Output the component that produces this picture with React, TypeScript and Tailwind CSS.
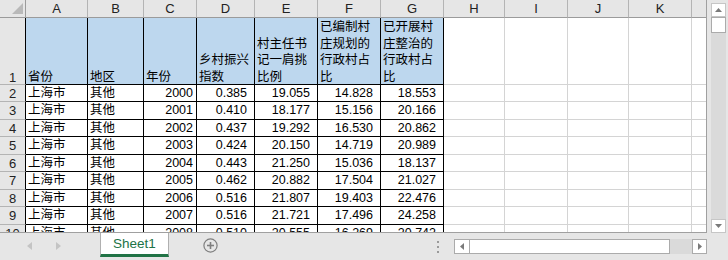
import React from "react";

const letters = ["", "A", "B", "C", "D", "E", "F", "G", "H", "I", "J", "K", ""];
const header1: string[][] = [
  ["省份"],
  ["地区"],
  ["年份"],
  ["乡村振兴", "指数"],
  ["村主任书", "记一肩挑", "比例"],
  ["已编制村", "庄规划的", "行政村占", "比"],
  ["已开展村", "庄整治的", "行政村占", "比"],
];
const data: string[][] = [
  ["2000", "0.385", "19.055", "14.828", "18.553"],
  ["2001", "0.410", "18.177", "15.156", "20.166"],
  ["2002", "0.437", "19.292", "16.530", "20.862"],
  ["2003", "0.424", "20.150", "14.719", "20.989"],
  ["2004", "0.443", "21.250", "15.036", "18.137"],
  ["2005", "0.462", "20.882", "17.504", "21.027"],
  ["2006", "0.516", "21.807", "19.403", "22.476"],
  ["2007", "0.516", "21.721", "17.496", "24.258"],
  ["2008", "0.510", "20.555", "16.269", "20.742"],
];

function HeaderRow() {
  return (
    <>
      <div className="relative bg-[#e6e6e6] border-r border-b border-r-[#9b9b9b] border-b-[#9b9b9b]">
        <svg className="absolute left-0 top-0" width="25" height="17" viewBox="0 0 25 17">
          <polygon points="23,3 23,14 12,14" fill="#b9b9b9" />
        </svg>
      </div>
      {letters.slice(1).map((l, i) => (
        <div
          key={i}
          className="bg-[#e6e6e6] border-r border-b border-r-[#b4b4b4] border-b-[#9b9b9b] flex items-center justify-center text-[13px] text-[#222] leading-none"
        >
          {l}
        </div>
      ))}
    </>
  );
}

function Row1() {
  return (
    <>
      <div className="bg-[#e6e6e6] border-r border-b border-r-black border-b-[#b4b4b4] flex items-end justify-center text-[13px] text-[#222] leading-[17px]">
        <div className="-mb-[2px]">1</div>
      </div>
      {header1.map((lines, i) => (
        <div
          key={i}
          className="bg-[#bdd7ee] border-r border-b border-black flex flex-col justify-end pl-[2px] text-[12.5px] leading-[16.8px] text-black whitespace-nowrap"
        >
          <div className="-mb-[2px]">
            {lines.map((t, j) => (
              <div key={j}>{t}</div>
            ))}
          </div>
        </div>
      ))}
      {[0, 1, 2, 3].map((k) => (
        <div key={k} className="bg-white border-r border-b border-[#d4d4d4]" />
      ))}
      <div className="bg-white border-b border-[#d4d4d4]" />
    </>
  );
}

function DataRow({ n, vals }: { n: number; vals: string[] }) {
  return (
    <>
      <div className="bg-[#e6e6e6] border-r border-b border-r-black border-b-[#b4b4b4] flex items-center justify-center text-[13px] text-[#222] leading-none">
        {n}
      </div>
      <div className="bg-white border-r border-b border-black flex items-center pl-[2px] text-[12.5px] leading-none whitespace-nowrap overflow-hidden">
        上海市
      </div>
      <div className="bg-white border-r border-b border-black flex items-center pl-[2px] text-[12.5px] leading-none whitespace-nowrap overflow-hidden">
        其他
      </div>
      <div className="bg-white border-r border-b border-black flex items-center justify-end pr-[3px] text-[12.5px] leading-none">
        {vals[0]}
      </div>
      {vals.slice(1).map((v, i) => (
        <div
          key={i}
          className="bg-white border-r border-b border-black flex items-center justify-end pr-[7px] text-[12.5px] leading-none"
        >
          {v}
        </div>
      ))}
      {[0, 1, 2, 3].map((k) => (
        <div key={k} className="bg-white border-r border-b border-[#d4d4d4]" />
      ))}
      <div className="bg-white border-b border-[#d4d4d4]" />
    </>
  );
}

function Tri({ dir, color, w, h }: { dir: "up" | "down" | "left" | "right"; color: string; w: number; h: number }) {
  let pts = "";
  if (dir === "up") pts = `0,${h} ${w},${h} ${w / 2},0`;
  if (dir === "down") pts = `0,0 ${w},0 ${w / 2},${h}`;
  if (dir === "left") pts = `${w},0 ${w},${h} 0,${h / 2}`;
  if (dir === "right") pts = `0,0 0,${h} ${w},${h / 2}`;
  return (
    <svg width={w} height={h} viewBox={`0 0 ${w} ${h}`}>
      <polygon points={pts} fill={color} />
    </svg>
  );
}

export default function App() {
  return (
    <div className="w-[728px] h-[260px] bg-[#e6e6e6] flex flex-col overflow-hidden font-['Liberation_Sans','Noto_Sans_CJK_SC',sans-serif] text-black">
      <div className="flex h-[233px]">
        <div className="w-[707px] h-[233px] border-r border-b border-[#a0a0a0] overflow-hidden bg-white">
          <div className="grid w-max grid-cols-[26px_62px_56px_53px_58px_63px_63px_63px_61px_63px_61px_63px_30px] grid-rows-[18px_67px_17px_18px_17px_18px_17px_18px_17px_18px_17px]">
            <HeaderRow />
            <Row1 />
            {data.map((vals, i) => (
              <DataRow key={i} n={i + 2} vals={vals} />
            ))}
          </div>
        </div>
        <div className="flex-1 flex flex-col pl-[4px] pt-[3px]">
          <div className="w-[15px] h-[14px] bg-white border border-[#c6c6c6] flex items-center justify-center">
            <Tri dir="up" color="#7a7a7a" w={7} h={4} />
          </div>
          <div className="w-[15px] flex-1 bg-[#dadada] flex flex-col">
            <div className="w-[15px] h-[16px] bg-white border border-[#ababab]" />
          </div>
          <div className="w-[15px] h-[14px] bg-white border border-[#c6c6c6] flex items-center justify-center">
            <Tri dir="down" color="#7a7a7a" w={7} h={4} />
          </div>
        </div>
      </div>
      <div className="flex items-start h-[27px]">
        <div className="ml-[27px] mt-[9px] flex">
          <Tri dir="left" color="#c4c4c4" w={5} h={8} />
        </div>
        <div className="ml-[24px] mt-[9px] flex">
          <Tri dir="right" color="#c4c4c4" w={5} h={8} />
        </div>
        <div className="ml-[39px] w-[69px] h-[24px] bg-white border-l border-r border-[#b0b0b0] border-b-[3px] border-b-[#217346] flex items-center justify-center text-[13.5px] text-[#217346] leading-none">
          Sheet1
        </div>
        <div className="ml-[34px] mt-[5px] flex">
          <svg width="15" height="15" viewBox="0 0 15 15">
            <circle cx="7.5" cy="7.5" r="6.6" fill="none" stroke="#7f7f7f" strokeWidth="1.2" />
            <line x1="7.5" y1="4" x2="7.5" y2="11" stroke="#7f7f7f" strokeWidth="1.6" />
            <line x1="4" y1="7.5" x2="11" y2="7.5" stroke="#7f7f7f" strokeWidth="1.6" />
          </svg>
        </div>
        <div className="ml-[219px] mt-[8px] w-[2px] flex flex-col gap-[3px]">
          <div className="w-[2px] h-[2px] bg-[#9a9a9a]" />
          <div className="w-[2px] h-[2px] bg-[#9a9a9a]" />
          <div className="w-[2px] h-[2px] bg-[#9a9a9a]" />
        </div>
        <div className="ml-[15px] mt-[6px] w-[253px] h-[15px] flex">
          <div className="w-[16px] h-[15px] bg-white border border-[#ababab] flex items-center justify-center">
            <Tri dir="left" color="#7a7a7a" w={4} h={7} />
          </div>
          <div className="flex-1 h-[15px] bg-white border-t border-b border-r border-[#ababab]" />
          <div className="w-[22px] h-[15px] bg-[#dadada]" />
          <div className="w-[15px] h-[15px] bg-white border border-[#ababab] flex items-center justify-center">
            <Tri dir="right" color="#7a7a7a" w={4} h={7} />
          </div>
        </div>
      </div>
    </div>
  );
}
